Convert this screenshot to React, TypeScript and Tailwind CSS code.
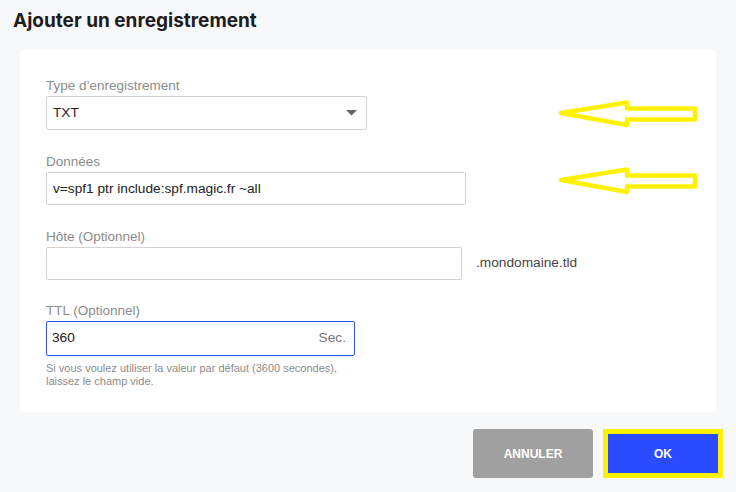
import { ChangeEvent, useState } from "react";

function Arrow({ className }: { className: string }) {
  return (
    <svg className={className} width="142" height="30" viewBox="0 0 142 30" fill="none">
      <path
        d="M3 13 L69 2.5 L69 8.5 L137 8.5 L137 19.5 L69 19.5 L69 25 Z"
        stroke="#fff200"
        strokeWidth="4.5"
        strokeLinejoin="round"
        fill="#ffffff"
      />
    </svg>
  );
}

function FieldLabel({ children }: { children: string }) {
  return <div className="h-[18px] text-[13.5px] leading-[16px] text-[#8c8c8c]">{children}</div>;
}

export default function App() {
  const [data, setData] = useState("v=spf1 ptr include:spf.magic.fr ~all");
  const [host, setHost] = useState("");
  const [ttl, setTtl] = useState("360");

  return (
    <div className="relative h-[492px] w-[736px] overflow-hidden bg-[#f7f8fa] font-['Liberation_Sans',Arial,sans-serif]">
      <h1 className="pl-[13px] pt-[9px] font-['Inter',sans-serif] text-[19px] font-bold leading-[24px] text-[#1d1d1d]">
        Ajouter un enregistrement
      </h1>

      <div className="ml-5 mt-[17px] h-[362px] w-[696px] rounded-sm bg-white pl-[26px] pt-7">
        <FieldLabel>Type d’enregistrement</FieldLabel>
        <div className="flex h-[34px] w-[321px] items-center justify-between rounded-[2px] border border-[#d3d3d3] pl-[6px] pr-[9px]">
          <span className="text-[13.7px] text-[#222]">TXT</span>
          <svg width="11" height="6" viewBox="0 0 11 6">
            <path d="M0 0 L11 0 L5.5 5.5 Z" fill="#666" />
          </svg>
        </div>

        <div className="mt-6">
          <FieldLabel>Données</FieldLabel>
          <input
            value={data}
            onChange={(e: ChangeEvent<HTMLInputElement>) => setData(e.target.value)}
            className="h-[33px] w-[420px] rounded-[2px] border border-[#d3d3d3] px-[6px] text-[13.7px] text-[#222] outline-none"
          />
        </div>

        <div className="mt-6">
          <FieldLabel>Hôte (Optionnel)</FieldLabel>
          <div className="flex items-center gap-[14px]">
            <input
              value={host}
              onChange={(e: ChangeEvent<HTMLInputElement>) => setHost(e.target.value)}
              className="h-[33px] w-[416px] rounded-[2px] border border-[#d3d3d3] px-[6px] text-[13.7px] text-[#222] outline-none"
            />
            <span className="text-[13.7px] text-[#444]">.mondomaine.tld</span>
          </div>
        </div>

        <div className="mt-[23px]">
          <FieldLabel>TTL (Optionnel)</FieldLabel>
          <div className="flex h-[35px] w-[309px] items-center rounded-[2px] border-[1.5px] border-[#2f50f0] pl-[5px] pr-[8px]">
            <input
              value={ttl}
              onChange={(e: ChangeEvent<HTMLInputElement>) => setTtl(e.target.value)}
              className="min-w-0 flex-1 text-[13.7px] text-[#222] outline-none"
            />
            <span className="text-[13.7px] text-[#777]">Sec.</span>
          </div>
          <p className="mt-[6px] text-[11px] leading-[13px] text-[#8c8c8c]">
            Si vous voulez utiliser la valeur par défaut (3600 secondes),
            <br />
            laissez le champ vide.
          </p>
        </div>
      </div>

      <div className="mr-[13px] mt-[17px] flex justify-end gap-[10px]">
        <button className="h-[49px] w-[120px] rounded-[3px] bg-[#a0a0a0] text-[12px] font-bold text-white">
          ANNULER
        </button>
        <button className="h-[49px] w-[120px] border-[5px] border-[#fff200] bg-[#2a4bff] text-[12px] font-bold text-white">
          OK
        </button>
      </div>

      <Arrow className="absolute left-[558px] top-[100px]" />
      <Arrow className="absolute left-[558px] top-[167px]" />
    </div>
  );
}
